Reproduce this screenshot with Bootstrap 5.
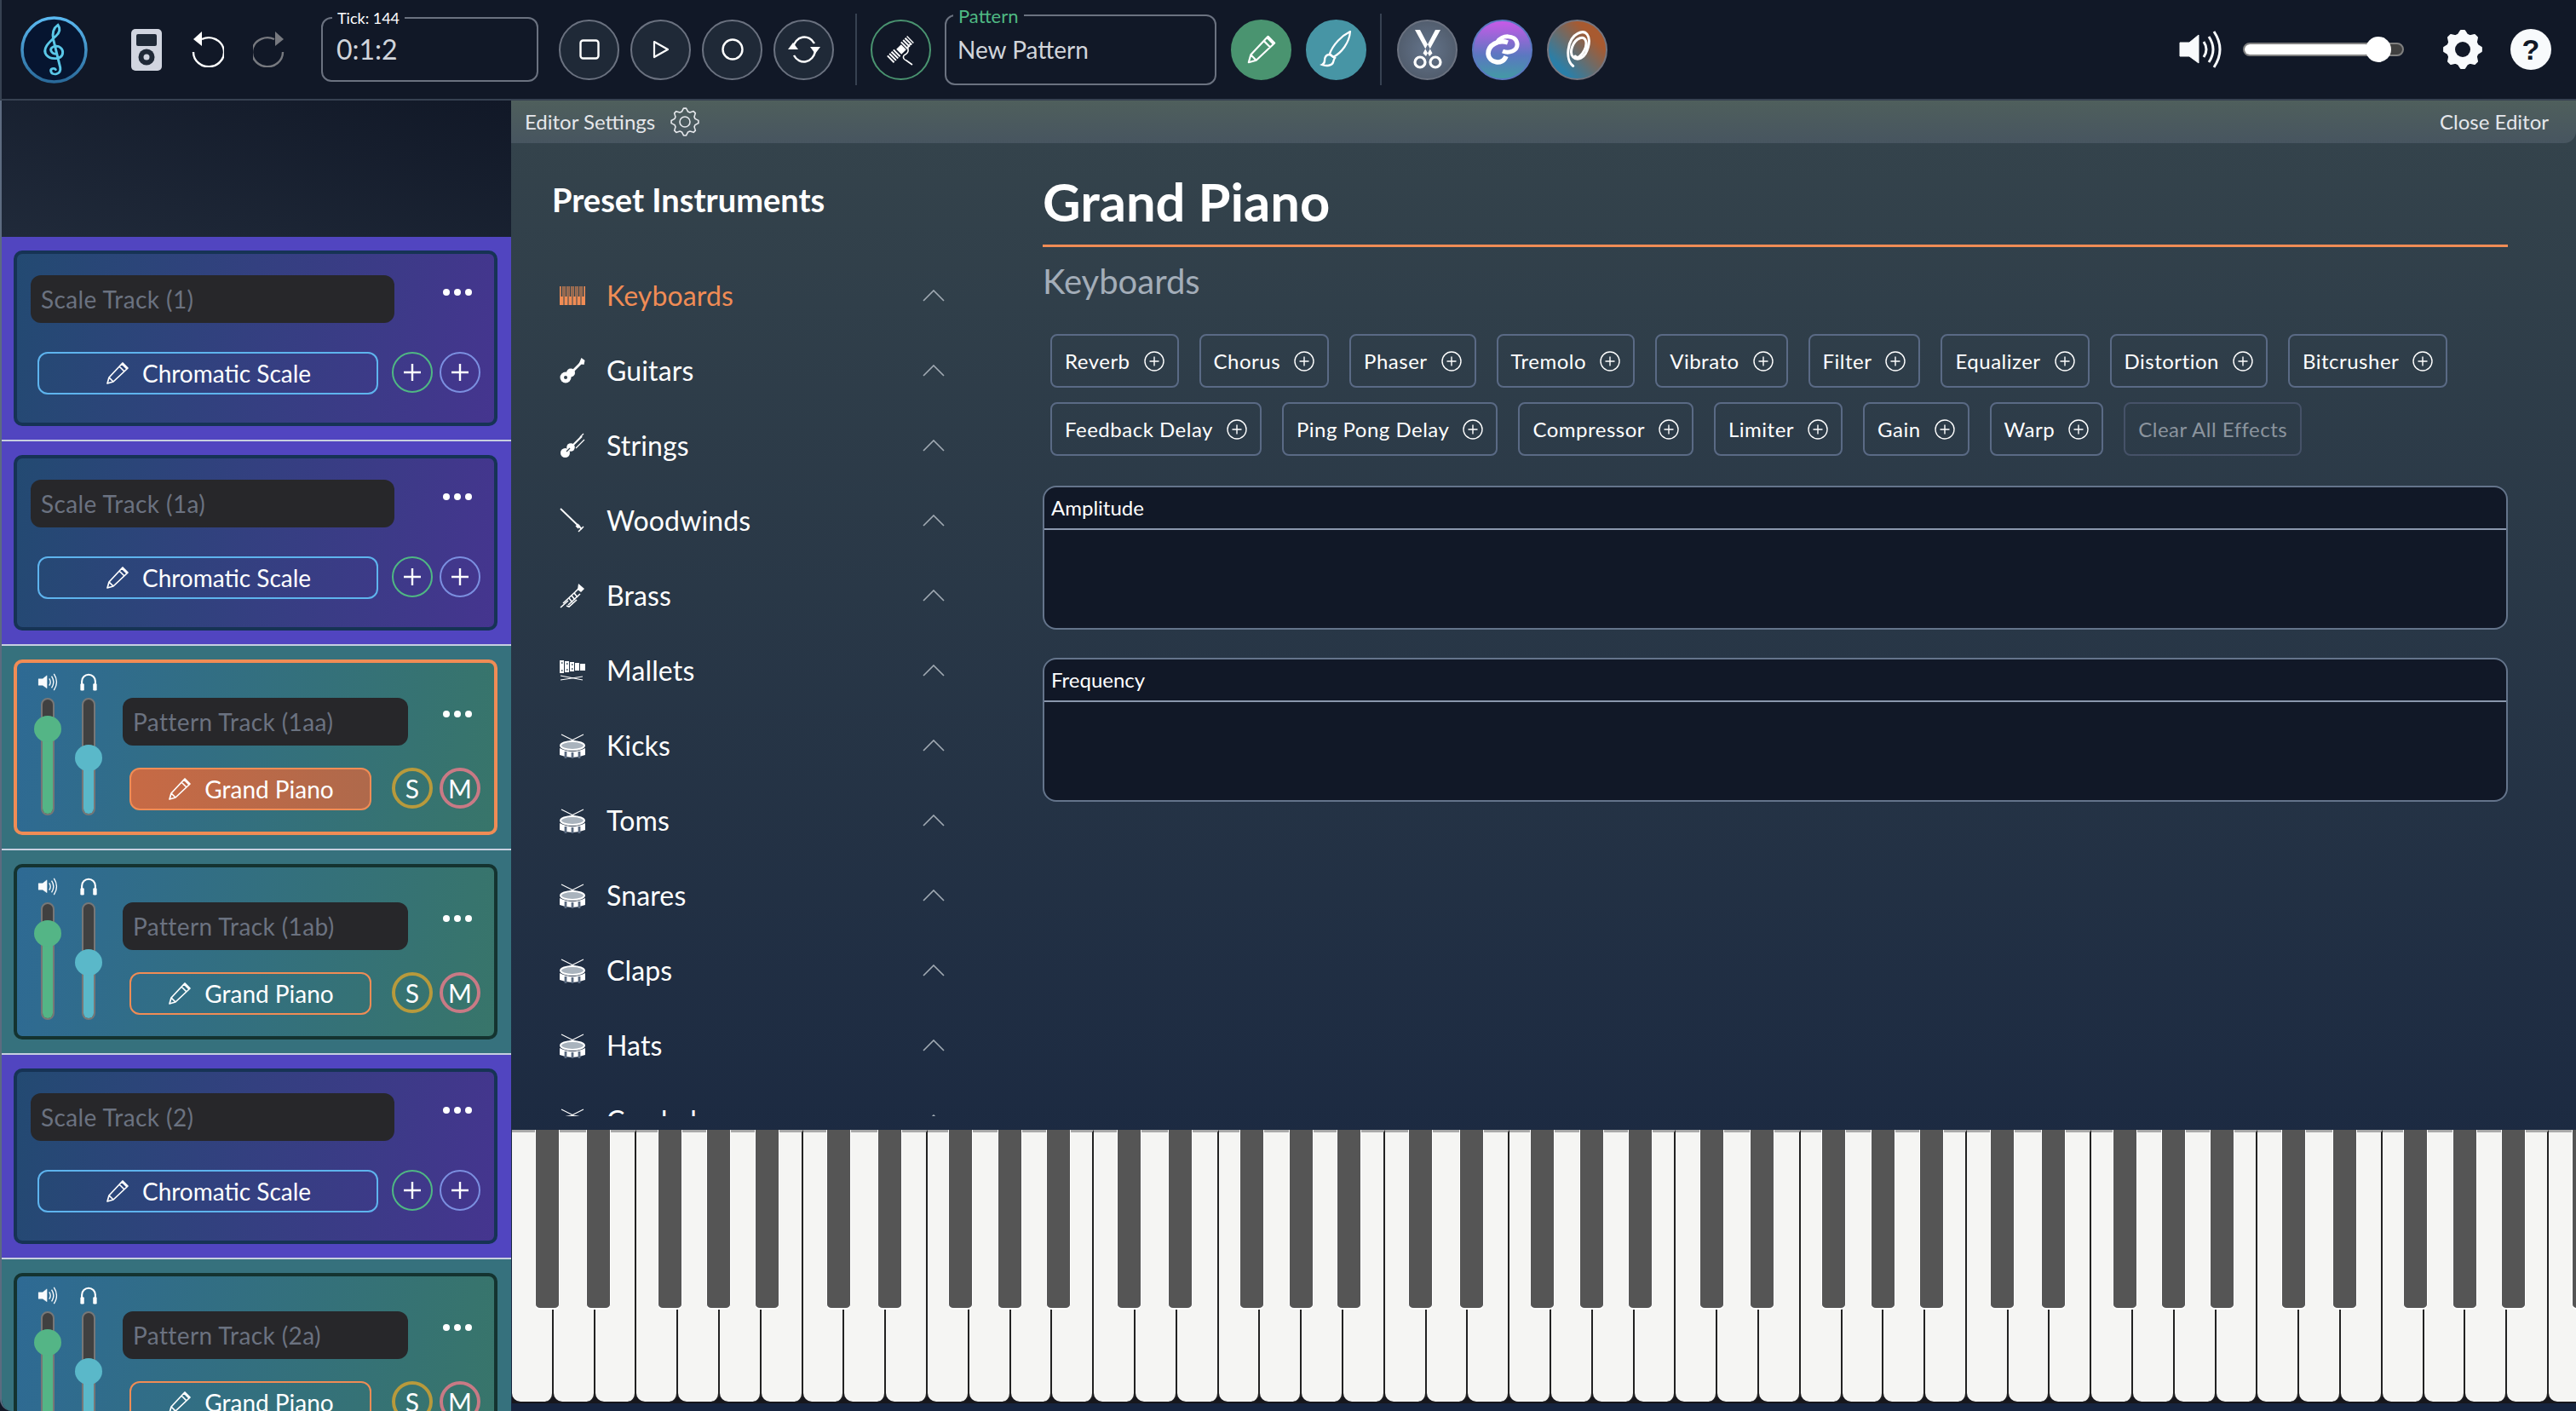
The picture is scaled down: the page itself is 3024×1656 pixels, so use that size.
<!DOCTYPE html>
<html lang="en">
<head>
<meta charset="UTF-8">
<title>Pattern Editor</title>
<link href="https://cdn.jsdelivr.net/npm/bootstrap@5.3.0/dist/css/bootstrap.min.css" rel="stylesheet">
<style>
body { background: #111827; color: #fff; font-family: "Lato", "Noto Sans", sans-serif; height: 1656px; overflow: hidden; }
svg { display: block; flex: none; }
.app-top { height: 118px; padding-left: 22px; padding-right: 29px; border-bottom: 2px solid #374151; border-left: 2px solid #374151; }
.logo-btn { width: 79px; height: 79px; margin-right: 51px; }
.ipod-ic { width: 36px; height: 49px; margin-right: 34px; }
.hist-ic { width: 39px; height: 42px; margin-right: 34px; }
.hist-off { color: #77797f; margin-right: 41px; }
.field-box { position: relative; height: 76px; border: 2px solid #6b7280; border-radius: 12px; padding-left: 16px; color: #d1d5db; display: flex; align-items: center; }
.tick-box { width: 255px; font-size: 32px; margin-right: 24px; }
.name-box { width: 319px; height: 83px; font-size: 28px; margin: 0 17px 0 16px; padding-left: 13px; }
.field-lbl { position: absolute; top: -11px; left: 11px; background: #111827; padding: 0 6px; font-size: 18px; line-height: 20px; color: #fff; }
.name-box .field-lbl { top: -10px; left: 8px; font-size: 22px; color: #4fb883; }
.round-btn { width: 71px; height: 71px; padding: 0; border-radius: 50%; border: 2px solid #6b7280; background: #1f2937; color: #fff; display: flex; align-items: center; justify-content: center; flex: none; }
.round-gap { margin-right: 13px; }
.top-sep { width: 2px; height: 84px; background: #374151; }
.sep-a { margin: 0 16px 0 25px; }
.sep-b { margin: 0 18px 0 16px; }
.btn-thread { background: transparent; border-color: #4a9470; }
.btn-pencil { background: #4a9470; border-color: #4a9470; margin-right: 17px; }
.btn-brush { background: #4795a5; border-color: #4795a5; }
.btn-cut { background: radial-gradient(circle, #64748b, #4b5563); margin-right: 17px; }
.btn-link2 { background: linear-gradient(#c85ae8, #5a78c0 60%, #439aa5); border-color: #5a78c0; margin-right: 17px; }
.btn-swirl { background: linear-gradient(45deg, #2a7fa8 20%, #a85a30 75%); border-color: #75757f; }
.vol-track { position: relative; width: 189px; height: 16px; margin: 0 45px 0 25px; border: 2px solid #808080; border-radius: 8px; background: #404040; }
.vol-fill { height: 100%; width: 80%; background: #fff; border-radius: 6px; }
.vol-thumb { position: absolute; width: 30px; height: 30px; left: 142px; top: -9px; border-radius: 50%; background: #fff; }
.help-ic { width: 48px; height: 48px; margin-left: 32px; border-radius: 50%; background: #f8fafc; color: #111827; font: 700 34px/48px "Liberation Sans", sans-serif; text-align: center; }
.app-main { height: 1538px; }
.track-col { width: 600px; flex: none; overflow: hidden; border-left: 2px solid #5d6b80; border-bottom-left-radius: 14px; }
.track-spacer { height: 160px; background: linear-gradient(to top right, #202a3a, #111827); }
.track-row { height: 240px; padding: 16px 16px 0 14px; border-bottom: 2px solid #c7cfe0; flex: none; }
.scale-row { background: #5145c0; }
.pattern-row { background: #36717d; }
.track-card { height: 206px; border: 4px solid #163355; border-radius: 10px; }
.scale-row .track-card { background: linear-gradient(100deg, #234a72, #45358f); padding: 25px 0 0 16px; }
.pattern-row .track-card { background: linear-gradient(100deg, #2e6a94, #38756a); border-color: #143330; padding: 12px 0 0 20px; }
.pattern-row .track-active { border-color: #f08c55; }
.name-input { height: 56px; border-radius: 12px; background: #27272a; color: #6b7280; font-size: 28px; letter-spacing: .4px; padding-left: 12px; display: flex; align-items: center; }
.scale-row .name-input { width: 427px; }
.pattern-row .name-input { width: 335px; }
.more-dots { display: flex; gap: 5px; margin-top: 16px; }
.scale-row .more-dots { margin-left: 57px; }
.pattern-row .more-dots { margin-left: 41px; margin-top: 15px; }
.more-dots i { width: 8px; height: 8px; border-radius: 50%; background: #fff; }
.inst-btn { height: 50px; padding: 0; border-radius: 12px; border: 2px solid #5eb4ee; color: #fff; font-size: 28px; display: flex; align-items: center; justify-content: center; gap: 14px; background: transparent; }
.scale-row .inst-btn { width: 400px; margin: 0 16px 0 8px; }
.scale-row .ctl-line { margin-top: 34px; }
.pattern-row .inst-btn { width: 284px; margin: 0 24px 0 8px; border-color: #f08c55; }
.pattern-row .ctl-line { margin-top: 26px; }
.pattern-row .inst-on { background: linear-gradient(90deg, #c76a45, #af694b); }
.mini-btn { width: 48px; height: 48px; padding: 0; border-radius: 50%; border: 2px solid #4fb883; background: transparent; color: #fff; font-size: 30px; line-height: 1; display: flex; align-items: center; justify-content: center; flex: none; margin-right: 8px; }
.mini-blue { border-color: #7b8fe0; }
.mini-solo { border: 4px solid #b89a3c; }
.mini-mute { border: 4px solid #c97a85; }
.mix-col { width: 32px; margin-right: 16px; flex: none; }
.mix-col svg { margin: 0 auto 8px; }
.mix-track { position: relative; width: 16px; height: 138px; margin: 0 auto; background: #404040; border: 2px solid #777; border-radius: 8px; overflow: visible; }
.mix-fill { position: absolute; left: 0; right: 0; bottom: 0; border-radius: 6px; }
.mix-thumb { position: absolute; width: 32px; height: 31px; left: -10px; border-radius: 50%; }
.mix-green .mix-fill, .mix-green .mix-thumb { background: #54b586; }
.mix-teal .mix-fill, .mix-teal .mix-thumb { background: #5ab8c9; }
.name-area { margin-left: 8px; padding-top: 29px; }
.editor-col { min-width: 0; background: linear-gradient(#35444c, #16243f 98%); }
.editor-head { height: 50px; padding: 0 32px 0 16px; font-size: 24px; color: #e5e7eb; background: linear-gradient(#4f5f5c, #475560); border-bottom-right-radius: 14px; }
.editor-head svg { margin-left: 18px; }
.editor-body { height: 1158px; }
.preset-col { width: 624px; flex: none; }
.preset-title { font-size: 38px; font-weight: 700; margin: 48px 0 0 48px; line-height: 36px; }
.preset-list { height: 1007px; margin-top: 51px; overflow: hidden; padding: 0; list-style: none; }
.preset-item { height: 88px; padding-left: 57px; font-size: 32px; letter-spacing: .15px; display: flex; align-items: center; flex: none; }
.preset-name { width: 371px; margin-left: 25px; }
.preset-on { color: #f08c55; }
.detail-col { width: 1720px; flex: none; }
.detail-title { font-size: 61.5px; font-weight: 700; line-height: 70px; margin-top: 33px; padding-bottom: 16px; border-bottom: 3px solid #f08c55; }
.detail-sub { font-size: 40px; color: #a3adb8; line-height: 48px; margin-top: 16px; }
.chip-wrap { display: flex; flex-wrap: wrap; gap: 17px 24px; margin: 38px 0 0 9px; }
.fx-chip { height: 63px; padding: 0 15px; border: 2px solid #5a6a85; border-radius: 8px; background: transparent; color: #fff; font-size: 24px; letter-spacing: .5px; display: flex; align-items: center; gap: 16px; }
.fx-clear { color: #8b949e; border-color: #465268; }
.env-panel { height: 169px; background: #111827; border: 2px solid #64748b; border-radius: 16px; margin-bottom: 33px; }
.env-head { height: 50px; padding-left: 8px; font-size: 24px; display: flex; align-items: center; border-bottom: 2px solid #8a97ad; }
.env-first { margin-top: 35px; }
.piano-wrap { height: 330px; overflow: hidden; }
.piano-keys { display: flex; height: 321px; background: #17171c; margin-left: 1px; }
.white-key { position: relative; flex: 0 0 48.8px; height: 319px; background: #f5f5f3; border-top: 3px solid #aaa; border-right: 2px solid #222; border-radius: 0 0 10px 10px; }
.black-key { position: absolute; top: -3px; width: 27px; height: 209px; background: #555; border: solid #fff; border-width: 0 1px 2px; border-radius: 0 0 6px 6px; z-index: 2; box-sizing: content-box; }
</style>
</head>
<body>

<svg width="0" height="0" style="position:absolute">
  <defs>
    <linearGradient id="logoRing" x1="0" y1="0" x2="0" y2="1"><stop offset="0" stop-color="#5ab8f0"/><stop offset="1" stop-color="#2a6a9a"/></linearGradient>
    <symbol id="i-pencil" viewBox="0 0 30 30"><path d="M3 27l2-7L20 4l6 6L10 25zM5 20l5 5M17 7l6 6M21 3l6 6-1 1-6-6z" fill="none" stroke="#fff" stroke-width="1.7" stroke-linejoin="round"/></symbol>
    <symbol id="i-plus" viewBox="0 0 24 24"><path d="M12 2v20M2 12h20" stroke="currentColor" stroke-width="2.4"/></symbol>
    <symbol id="i-cplus" viewBox="0 0 24 24"><circle cx="12" cy="12" r="11" fill="none" stroke="#fff" stroke-width="1.4"/><path d="M12 6.5v11M6.5 12h11" stroke="#fff" stroke-width="1.4"/></symbol>
    <symbol id="i-speaker" viewBox="0 0 50 46"><path d="M1 15h11L23 6v33L12 31H1z" fill="#f8fafc" stroke="#f8fafc" stroke-linejoin="round"/><path d="M29 14q6 9 0 18M35 8q10 15 0 30M41 2q14 21 0 42" fill="none" stroke="#f8fafc" stroke-width="3"/></symbol>
    <symbol id="i-phones" viewBox="0 0 24 24"><path d="M3 15V11a9 9 0 0 1 18 0v4" fill="none" stroke="#fff" stroke-width="2.4"/><rect x="1" y="14" width="5" height="9.500" rx="1.5" fill="#fff"/><rect x="18" y="14" width="5" height="9.500" rx="1.5" fill="#fff"/></symbol>
    <symbol id="i-chev" viewBox="0 0 26 14"><path d="M1 13L13 1l12 12" fill="none" stroke="#a2abb4" stroke-width="1.6"/></symbol>
    <symbol id="i-keys" viewBox="0 0 30 22"><rect width="30" height="22" fill="#f08c55"/><path d="M5 0v22M10 0v22M15 0v22M20 0v22M25 0v22" stroke="#35444c" stroke-width="1"/><path d="M2.500 0v12M7.500 0v12M12.500 0v12M17.500 0v12M22.500 0v12M27.500 0v12" stroke="#35444c" stroke-width="1.800"/></symbol>
    <symbol id="i-guitar" viewBox="0 0 30 30"><circle cx="7" cy="23" r="6.500" fill="#fff"/><circle cx="13" cy="17.500" r="5" fill="#fff"/><circle cx="7" cy="23" r="2" fill="#33414c"/><path d="M13 18L25 6" stroke="#fff" stroke-width="2.800"/><path d="M22.500 7l3-7 4 3-1 5z" fill="#fff"/></symbol>
    <symbol id="i-violin" viewBox="0 0 30 30"><circle cx="6.500" cy="23.500" r="5.500" fill="#fff"/><circle cx="13" cy="17" r="4.800" fill="#fff"/><path d="M13 17L26 4" stroke="#fff" stroke-width="2.200"/><path d="M24 5l4-4M19 18L29 8" stroke="#fff" stroke-width="1.200"/><path d="M8 22l4-4" stroke="#33414c" stroke-width="1.200"/></symbol>
    <symbol id="i-wind" viewBox="0 0 30 30"><path d="M1 1l25 24" stroke="#fff" stroke-width="1.8"/><path d="M20 20l3 3" stroke="#fff" stroke-width="4"/><path d="M22 28l6-6" stroke="#fff" stroke-width="1.4"/></symbol>
    <symbol id="i-trumpet" viewBox="0 0 30 30"><path d="M1 29L10 21M4 24l14-13 5-5M10 26l14-13M8 27l3 1 9-8" fill="none" stroke="#fff" stroke-width="1.600"/><path d="M21 8l1-7 7 6-4 4z" fill="#fff"/><path d="M11 18l4 5M14 15l4 5M17 12l4 5" stroke="#fff" stroke-width="1.600"/></symbol>
    <symbol id="i-mallet" viewBox="0 0 30 24"><g fill="#fff"><rect x="0" y="0" width="5" height="15"/><rect x="6" y="1" width="5" height="13"/><rect x="12" y="2" width="5" height="11"/><rect x="18" y="3" width="5" height="9"/><rect x="24" y="4" width="6" height="8"/></g><path d="M1 23l26-4M1 18l26 5" stroke="#fff" stroke-width="1.1"/><g fill="#5a6a75"><rect x="2" y="2" width="1.500" height="2"/><rect x="2" y="11" width="1.500" height="2"/><rect x="8" y="3" width="1.500" height="2"/><rect x="8" y="10" width="1.500" height="2"/><rect x="14" y="4" width="1.500" height="2"/><rect x="14" y="9" width="1.500" height="2"/></g></symbol>
    <symbol id="i-drum" viewBox="0 0 30 29"><path d="M2 1l24 12M28 1L4 13" stroke="#fff" stroke-width="1.100"/><ellipse cx="15" cy="14" rx="14" ry="5" fill="#a9b3bd" stroke="#fff" stroke-width="2"/><path d="M0 17q15 8 30 0v8q-15 6-30 0z" fill="#fff"/><path d="M7 21v8M15 22v8M23 21v8" stroke="#5a6a80" stroke-width="2.800"/></symbol>
  </defs>
</svg>

<div class="app-top d-flex align-items-center">
  <svg class="logo-btn" viewBox="0 0 79 79">
    <circle cx="39.5" cy="39.5" r="37.5" fill="#061530" stroke="url(#logoRing)" stroke-width="3.5"/>
    <g transform="translate(17,9) scale(1.35,1.22)"><path d="M19 29C14 29 12 24 16 22C21 20 25 24 24 29C23 34 14 35 10 30C6 24 12 18 18 12C22 8 22 4 20 1C16 4 15 9 16 15L22 42C23 49 15 50 14 46C13 43 17 42 18 44" fill="none" stroke="#5ac8e8" stroke-width="2.2" stroke-linecap="round"/></g>
  </svg>
  <svg class="ipod-ic" viewBox="0 0 36 49"><rect width="36" height="49" rx="5" fill="#d1d5e0"/><rect x="6" y="6" width="24" height="14" rx="2" fill="#1f2937"/><circle cx="18" cy="33" r="9.5" fill="#1f2937"/><circle cx="18" cy="33" r="3.5" fill="#d1d5e0"/></svg>
  <svg class="hist-ic" viewBox="0 0 39 42"><path d="M12 8a18 17 0 1 1-10 15" transform="translate(1,1)" fill="none" stroke="#fff" stroke-width="2.4"/><path d="M13 0v17L3 9z" fill="#fff"/></svg>
  <svg class="hist-ic hist-off" viewBox="0 0 39 42"><path d="M25 8a18 17 0 1 0 10 15" transform="translate(0,1)" fill="none" stroke="currentColor" stroke-width="2.4"/><path d="M26 0v17L36 9z" fill="currentColor"/></svg>
  <div class="field-box tick-box"><span class="field-lbl">Tick: 144</span>0:1:2</div>
  <button class="round-btn round-gap" type="button"><svg width="24" height="24" viewBox="0 0 24 24"><rect x="1.5" y="1.5" width="21" height="21" rx="3" fill="none" stroke="#fff" stroke-width="2.4"/></svg></button>
  <button class="round-btn round-gap" type="button"><svg width="20" height="22" viewBox="0 0 20 22"><path d="M2 2l16 9-16 9z" fill="none" stroke="#fff" stroke-width="2.2" stroke-linejoin="round"/></svg></button>
  <button class="round-btn round-gap" type="button"><svg width="26" height="26" viewBox="0 0 26 26"><circle cx="13" cy="13" r="11.5" fill="none" stroke="#fff" stroke-width="2.4"/></svg></button>
  <button class="round-btn" type="button"><svg width="40" height="36" viewBox="0 0 40 36"><path d="M7 16A13.500 15 0 0 1 32 11M33 20A13.500 15 0 0 1 8 25" fill="none" stroke="#fff" stroke-width="2.4"/><path d="M1 18l6-8 6 8zM27 15h12l-6 8z" fill="#fff"/></svg></button>
  <div class="top-sep sep-a"></div>
  <button class="round-btn btn-thread" type="button"><svg width="36" height="42" viewBox="0 0 36 42"><path d="M5 33L14 24M21 17L29 9" stroke="#fff" stroke-width="11" stroke-dasharray="2 1.300"/><path d="M15 18l6 6" stroke="#fff" stroke-width="8"/><path d="M21 28q6-3 5-7t3-6M21 28q-2 4 3 6l7 5" fill="none" stroke="#fff" stroke-width="1.600"/></svg></button>
  <div class="field-box name-box"><span class="field-lbl">Pattern</span>New Pattern</div>
  <button class="round-btn btn-pencil" type="button"><svg width="38" height="38"><use href="#i-pencil"/></svg></button>
  <button class="round-btn btn-brush" type="button"><svg width="40" height="44" viewBox="0 0 40 44"><path d="M36 1C35 14 26 26 16 31L12 27C16 16 26 6 36 1z" fill="none" stroke="#fff" stroke-width="2.2" stroke-linejoin="round"/><path d="M12 28c-5 0-6 4-6 7s-1 4-3 5c5 2 12 1 13-3s1-4 2-5z" fill="none" stroke="#fff" stroke-width="2.4"/></svg></button>
  <div class="top-sep sep-b"></div>
  <button class="round-btn btn-cut" type="button"><svg width="36" height="46" viewBox="0 0 36 46"><path d="M3 0l17 31 3.500-3.500L9 0zM33 0L16 31l-3.500-3.500L27 0z" fill="#fff"/><circle cx="9" cy="38" r="6" fill="none" stroke="#fff" stroke-width="3.200"/><circle cx="27" cy="38" r="6" fill="none" stroke="#fff" stroke-width="3.200"/></svg></button>
  <button class="round-btn btn-link2" type="button"><svg width="40" height="40" viewBox="0 0 40 40"><path d="M14 11C18 3 35 2 37 13c1 9-10 12-17 9" fill="none" stroke="#fff" stroke-width="5"/><path d="M26 12C15 8 3 15 3 25c1 11 17 14 21 3" fill="none" stroke="#fff" stroke-width="5.500"/></svg></button>
  <button class="round-btn btn-swirl" type="button"><svg width="38" height="46" viewBox="0 0 40 52"><path d="M14 48C3 40 6 12 20 5c11-6 18 3 14 18S20 42 14 36 14 14 23 11s10 8 6 16-10 12-12 8" fill="none" stroke="#fff" stroke-width="3.400" stroke-linecap="round"/></svg></button>

  <svg class="ms-auto" width="50" height="46"><use href="#i-speaker"/></svg>
  <div class="vol-track"><div class="vol-fill"></div><div class="vol-thumb"></div></div>
  <svg width="48" height="48" viewBox="0 0 48 48"><path class="gear-path" data-r1="22" data-r2="18" fill="#f8fafc" stroke="#f8fafc" stroke-width="2" stroke-linejoin="round"/><circle cx="24" cy="24" r="9" fill="#111827"/></svg>
  <div class="help-ic">?</div>
</div>

<div class="app-main d-flex">
  <div class="track-col">
    <div class="track-spacer"></div>
    <div id="trackList"></div>
  </div>

  <div class="editor-col flex-grow-1">
    <div class="editor-head d-flex align-items-center">
      <span>Editor Settings</span>
      <svg width="34" height="34" viewBox="0 0 34 34"><path class="gear-path" data-r1="16" data-r2="12.500" fill="none" stroke="#e5e7eb" stroke-width="1.6" stroke-linejoin="round"/><circle cx="17" cy="17" r="6" fill="none" stroke="#e5e7eb" stroke-width="1.6"/></svg>
      <span class="ms-auto">Close Editor</span>
    </div>
    <div class="editor-body d-flex">
      <div class="preset-col">
        <div class="preset-title">Preset Instruments</div>
        <ul class="preset-list" id="presetList"></ul>
      </div>
      <div class="detail-col">
        <div class="detail-title">Grand Piano</div>
        <div class="detail-sub">Keyboards</div>
        <div class="chip-wrap" id="chipWrap"></div>
        <div class="env-panel env-first"><div class="env-head">Amplitude</div></div>
        <div class="env-panel"><div class="env-head">Frequency</div></div>
      </div>
    </div>
    <div class="piano-wrap"><div class="piano-keys" id="pianoKeys"></div></div>
  </div>
</div>

<script>
    // Track rows
    const tracks = [
        { type: 'scale', name: 'Scale Track (1)', inst: 'Chromatic Scale' },
        { type: 'scale', name: 'Scale Track (1a)', inst: 'Chromatic Scale' },
        { type: 'pattern', name: 'Pattern Track (1aa)', inst: 'Grand Piano', active: true },
        { type: 'pattern', name: 'Pattern Track (1ab)', inst: 'Grand Piano' },
        { type: 'scale', name: 'Scale Track (2)', inst: 'Chromatic Scale' },
        { type: 'pattern', name: 'Pattern Track (2a)', inst: 'Grand Piano' }
    ];

    const dots = '<div class="more-dots"><i></i><i></i><i></i></div>';
    const pencil = '<svg width="30" height="30"><use href="#i-pencil"/></svg>';

    function mixer(cls, icon, thumbTop) {
        return `<div class="mix-col ${cls}">${icon}<div class="mix-track">
            <div class="mix-fill" style="top:${thumbTop + 10}px"></div>
            <div class="mix-thumb" style="top:${thumbTop}px"></div></div></div>`;
    }

    document.getElementById('trackList').innerHTML = tracks.map(function (t) {
        if (t.type === 'scale') {
            return `<div class="track-row scale-row"><div class="track-card">
                <div class="d-flex"><div class="name-input">${t.name}</div>${dots}</div>
                <div class="d-flex ctl-line">
                    <button class="inst-btn" type="button">${pencil}${t.inst}</button>
                    <button class="mini-btn" type="button"><svg width="24" height="24"><use href="#i-plus"/></svg></button>
                    <button class="mini-btn mini-blue" type="button"><svg width="24" height="24"><use href="#i-plus"/></svg></button>
                </div></div></div>`;
        }
        return `<div class="track-row pattern-row"><div class="track-card d-flex ${t.active ? 'track-active' : ''}">
            ${mixer('mix-green', '<svg width="24" height="21" viewBox="0 0 50 46"><use href="#i-speaker"/></svg>', 19)}
            ${mixer('mix-teal', '<svg width="22" height="21"><use href="#i-phones"/></svg>', 53)}
            <div class="name-area">
                <div class="d-flex"><div class="name-input">${t.name}</div>${dots}</div>
                <div class="d-flex ctl-line">
                    <button class="inst-btn ${t.active ? 'inst-on' : ''}" type="button">${pencil}${t.inst}</button>
                    <button class="mini-btn mini-solo" type="button">S</button>
                    <button class="mini-btn mini-mute" type="button">M</button>
                </div>
            </div></div></div>`;
    }).join('');

    // Instrument list
    const presets = [
        ['Keyboards', 'keys', 30, 22], ['Guitars', 'guitar', 30, 30], ['Strings', 'violin', 30, 30],
        ['Woodwinds', 'wind', 30, 30], ['Brass', 'trumpet', 30, 30], ['Mallets', 'mallet', 30, 24],
        ['Kicks', 'drum', 30, 29], ['Toms', 'drum', 30, 29], ['Snares', 'drum', 30, 29],
        ['Claps', 'drum', 30, 29], ['Hats', 'drum', 30, 29], ['Cymbals', 'drum', 30, 29]
    ];
    document.getElementById('presetList').innerHTML = presets.map(function (p, i) {
        return `<li class="preset-item ${i === 0 ? 'preset-on' : ''}">
            <svg width="${p[2]}" height="${p[3]}"><use href="#i-${p[1]}"/></svg>
            <span class="preset-name">${p[0]}</span>
            <svg width="26" height="14"><use href="#i-chev"/></svg></li>`;
    }).join('');

    // Effect chips
    const effects = ['Reverb', 'Chorus', 'Phaser', 'Tremolo', 'Vibrato', 'Filter', 'Equalizer', 'Distortion', 'Bitcrusher',
        'Feedback Delay', 'Ping Pong Delay', 'Compressor', 'Limiter', 'Gain', 'Warp'];
    document.getElementById('chipWrap').innerHTML = effects.map(function (e) {
        return `<button class="fx-chip" type="button">${e}<svg width="24" height="24"><use href="#i-cplus"/></svg></button>`;
    }).join('') + '<button class="fx-chip fx-clear" type="button">Clear All Effects</button>';

    // Piano: offsets of the black key centre from the key boundary, by note
    const blackOffsets = { 0: -7, 1: 4, 3: -10, 4: -1, 5: 7 };
    let keys = '';
    for (let i = 0; i < 50; i++) {
        const off = blackOffsets[i % 7];
        const black = off === undefined ? '' : `<div class="black-key" style="left:${48.8 + off - 14.5}px"></div>`;
        keys += `<div class="white-key">${black}</div>`;
    }
    document.getElementById('pianoKeys').innerHTML = keys;

    // Gear outlines
    document.querySelectorAll('.gear-path').forEach(function (el) {
        const r1 = parseFloat(el.dataset.r1), r2 = parseFloat(el.dataset.r2);
        const c = el.ownerSVGElement.viewBox.baseVal.width / 2;
        let d = '';
        for (let i = 0; i < 32; i++) {
            const a = i / 32 * Math.PI * 2;
            const r = [r1, r1, r2, r2][i % 4];
            d += (i ? 'L' : 'M') + (c + r * Math.cos(a - 0.1)).toFixed(2) + ' ' + (c + r * Math.sin(a - 0.1)).toFixed(2);
        }
        el.setAttribute('d', d + 'Z');
    });
</script>

<script src="https://cdn.jsdelivr.net/npm/bootstrap@5.3.0/dist/js/bootstrap.bundle.min.js"></script>
</body>
</html>
